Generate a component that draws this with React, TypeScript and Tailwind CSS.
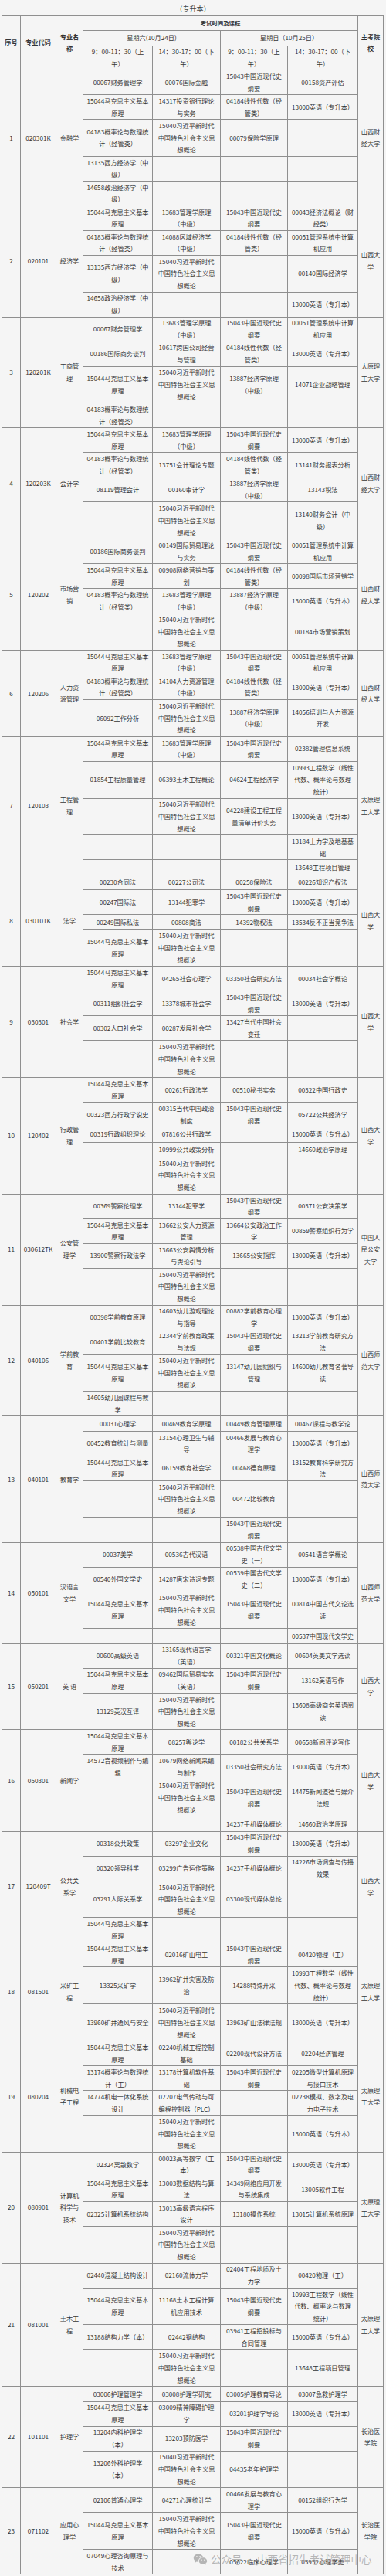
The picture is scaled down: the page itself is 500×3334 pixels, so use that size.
import React from 'react';
import { RiWechatFill } from 'react-icons/ri';

type Group = { no: string; code: string; name: string; school: string; rows: string[][] };

// common courses, '|' marks a line break as in the printed table
const MKS = '15044马克思主义基本|原理';
const XJP = '15040习近平新时代|中国特色社会主义思|想概论';
const ZGJ = '15043中国近现代史|纲要';
const YY = '13000英语（专升本）';
const GL = '04183概率论与数理统|计（经管类）';
const XX = '04184线性代数（经|管类）';
const GLX = '13683管理学原理|（中级）';
const JJX = '13887经济学原理|（中级）';
const JSJ = '00051管理系统中计算|机应用';
const GCSX = '10993工程数学（线性|代数、概率论与数理|统计）';

const groups: Group[] = [
  {
    no: '1', code: '020301K', name: '金融学', school: '山西财|经大学',
    rows: [
      ['00067财务管理学', '00076国际金融', ZGJ, '00158资产评估'],
      [MKS, '14317投资银行理论|与实务', XX, YY],
      [GL, XJP, '00079保险学原理', ''],
      ['13135西方经济学（中|级）', '', '', ''],
      ['14658政治经济学（中|级）', '', '', ''],
    ],
  },
  {
    no: '2', code: '020101', name: '经济学', school: '山西大|学',
    rows: [
      [MKS, GLX, ZGJ, '00043经济法概论（财|经类）'],
      [GL, '14088区域经济学|（中级）', XX, JSJ],
      ['13135西方经济学（中|级）', XJP, '', '00140国际经济学'],
      ['14658政治经济学（中|级）', '', '', YY],
    ],
  },
  {
    no: '3', code: '120201K', name: '工商管|理', school: '太原理|工大学',
    rows: [
      ['00067财务管理学', GLX, ZGJ, JSJ],
      ['00186国际商务谈判', '10617跨国公司经营|与管理', XX, YY],
      [MKS, XJP, JJX, '14071企业战略管理'],
      [GL, '', '', ''],
    ],
  },
  {
    no: '4', code: '120203K', name: '会计学', school: '山西财|经大学',
    rows: [
      [MKS, GLX, ZGJ, YY],
      [GL, '13751会计理论专题', XX, '13141财务报表分析'],
      ['08119管理会计', '00160审计学', JJX, '13143税法'],
      ['', XJP, '', '13140财务会计（中|级）'],
    ],
  },
  {
    no: '5', code: '120202', name: '市场营|销', school: '山西财|经大学',
    rows: [
      ['00186国际商务谈判', '00149国际贸易理论|与实务', ZGJ, JSJ],
      [MKS, '00908网络营销与策|划', XX, '00098国际市场营销学'],
      [GL, GLX, JJX, YY],
      ['', XJP, '', '00184市场营销策划'],
    ],
  },
  {
    no: '6', code: '120206', name: '人力资|源管理', school: '山西财|经大学',
    rows: [
      [MKS, GLX, ZGJ, JSJ],
      [GL, '14104人力资源管理|（中级）', XX, YY],
      ['06092工作分析', XJP, JJX, '14056培训与人力资源|开发'],
    ],
  },
  {
    no: '7', code: '120103', name: '工程管|理', school: '太原理|工大学',
    rows: [
      [MKS, GLX, ZGJ, '02382管理信息系统'],
      ['01854工程质量管理', '06393土木工程概论', '04624工程经济学', GCSX],
      ['', XJP, '04228建设工程工程|量清单计价实务', YY],
      ['', '', '', '13184土力学及地基基|础'],
      ['', '', '', '13648工程项目管理'],
    ],
  },
  {
    no: '8', code: '030101K', name: '法学', school: '山西大|学',
    rows: [
      ['00230合同法', '00227公司法', '00258保险法', '00226知识产权法'],
      ['00247国际法', '13144犯罪学', ZGJ, YY],
      ['00249国际私法', '00808商法', '14392物权法', '13534反不正当竞争法'],
      [MKS, XJP, '', ''],
    ],
  },
  {
    no: '9', code: '030301', name: '社会学', school: '山西大|学',
    rows: [
      [MKS, '04265社会心理学', '03350社会研究方法', '00034社会学概论'],
      ['00311组织社会学', '13378城市社会学', ZGJ, YY],
      ['00302人口社会学', '00287发展社会学', '13427当代中国社会|变迁', ''],
      ['', XJP, '', ''],
    ],
  },
  {
    no: '10', code: '120402', name: '行政管|理', school: '山西大|学',
    rows: [
      [MKS, '00261行政法学', '00510秘书实务', '00322中国行政史'],
      ['00323西方行政学说史', '00315当代中国政治|制度', ZGJ, '05722公共经济学'],
      ['00319行政组织理论', '07816公共行政学', '', YY],
      ['', '10999公共政策分析', '', '14660政治学原理'],
      ['', XJP, '', ''],
    ],
  },
  {
    no: '11', code: '030612TK', name: '公安管|理学', school: '中国人|民公安|大学',
    rows: [
      ['00369警察伦理学', '13144犯罪学', ZGJ, '00371公安决策学'],
      [MKS, '13662公安人力资源|管理', '13664公安政治工作|学', '00859警察组织行为学'],
      ['13900警察行政法学', '13663公安舆情分析|与舆论引导', '13665公安指挥', YY],
      ['', XJP, '', ''],
    ],
  },
  {
    no: '12', code: '040106', name: '学前教|育', school: '山西师|范大学',
    rows: [
      ['00398学前教育原理', '14603幼儿游戏理论|与指导', '00882学前教育心理|学', YY],
      ['00401学前比较教育', '12344学前教育政策|与法规', ZGJ, '13213学前教育研究方|法'],
      [MKS, XJP, '13147幼儿园组织与|管理', '14600幼儿教育名著导|读'],
      ['14605幼儿园课程与教|学', '', '', ''],
    ],
  },
  {
    no: '13', code: '040101', name: '教育学', school: '山西师|范大学',
    rows: [
      ['00031心理学', '00469教育学原理', '00449教育管理原理', '00467课程与教学论'],
      ['00452教育统计与测量', '13154心理卫生与辅|导', '00466发展与教育心|理学', YY],
      [MKS, '06159教育社会学', '00468德育原理', '13152教育科学研究方|法'],
      ['', XJP, '00472比较教育', ''],
      ['', '', ZGJ, ''],
    ],
  },
  {
    no: '14', code: '050101', name: '汉语言|文学', school: '山西师|范大学',
    rows: [
      ['00037美学', '00536古代汉语', '00538中国古代文学|史（一）', '00541语言学概论'],
      ['00540外国文学史', '14287唐宋诗词专题', '00539中国古代文学|史（二）', YY],
      [MKS, XJP, ZGJ, '00814中国古代文论选|读'],
      ['', '', '', '00537中国现代文学史'],
    ],
  },
  {
    no: '15', code: '050201', name: '英 语', school: '山西大|学',
    rows: [
      ['00600高级英语', '13165现代语言学|（英语）', '00321中国文化概论', '00604英美文学选读'],
      [MKS, '09462国际贸易实务|（英语）', ZGJ, '13162英语写作'],
      ['13129英汉互译', XJP, '', '13608高级商务英语阅|读'],
    ],
  },
  {
    no: '16', code: '050301', name: '新闻学', school: '山西大|学',
    rows: [
      [MKS, '08257舆论学', '00182公共关系学', '00658新闻评论写作'],
      ['14572音视频制作与编|辑', '10679网络新闻采编|与制作', '03350社会研究方法', YY],
      ['', XJP, ZGJ, '14475新闻道德与媒介|法规'],
      ['', '', '14237手机媒体概论', '14660政治学原理'],
    ],
  },
  {
    no: '17', code: '120409T', name: '公共关|系学', school: '山西大|学',
    rows: [
      ['00318公共政策', '03297企业文化', ZGJ, YY],
      ['00320领导科学', '03299广告运作策略', '14237手机媒体概论', '14226市场调查与传播|效果'],
      ['03291人际关系学', XJP, '03300现代媒体总论', ''],
      [MKS, '', '', ''],
    ],
  },
  {
    no: '18', code: '081501', name: '采矿工|程', school: '太原理|工大学',
    rows: [
      [MKS, '02016矿山电工', ZGJ, '00420物理（工）'],
      ['13325采矿学', '13962矿井灾害及防|治', '14288特殊开采', GCSX],
      ['13960矿井通风与安全', XJP, '13963矿山法律法规', YY],
    ],
  },
  {
    no: '19', code: '080204', name: '机械电|子工程', school: '太原理|工大学',
    rows: [
      [MKS, '02240机械工程控制|基础', '02200现代设计方法', '02204经济管理'],
      ['13174概率论与数理统|计（工）', '13178计算机软件基|础', ZGJ, '02205微型计算机原理|与接口技术'],
      ['14774机电一体化系统|设计', '02207电气传动与可|编程控制器（PLC）', '', '02238模拟、数字及电|力电子技术'],
      ['', XJP, '', YY],
    ],
  },
  {
    no: '20', code: '080901', name: '计算机|科学与|技术', school: '太原理|工大学',
    rows: [
      ['02324离散数学', '00023高等数学（工|本）', ZGJ, YY],
      [MKS, '13003数据结构与算|法', '14349网络应用开发|与系统集成', '13005软件工程'],
      ['02325计算机系统结构', '13013高级语言程序|设计', '13180操作系统', '13015计算机系统原理'],
      ['', XJP, '', ''],
    ],
  },
  {
    no: '21', code: '081001', name: '土木工|程', school: '太原理|工大学',
    rows: [
      ['02440混凝土结构设计', '02160流体力学', '02404工程地质及土|力学', '00420物理（工）'],
      [MKS, '11168土木工程计算|机应用技术', ZGJ, GCSX],
      ['13188结构力学（本）', '02442钢结构', '03941工程招投标与|合同管理', YY],
      ['', XJP, '', '13648工程项目管理'],
    ],
  },
  {
    no: '22', code: '101101', name: '护理学', school: '长治医|学院',
    rows: [
      ['03006护理管理学', '03008护理学研究', '03005护理教育导论', '03007急救护理学'],
      [MKS, '03009精神障碍护理|学', '03201护理学导论', YY],
      ['13204内科护理学|（本）', '13203预防医学', ZGJ, ''],
      ['13206外科护理学|（本）', XJP, '04435老年护理学', ''],
    ],
  },
  {
    no: '23', code: '071102', name: '应用心|理学', school: '长治医|学院',
    rows: [
      ['02106普通心理学', '04271心理统计学', '00466发展与教育心|理学', '00152组织行为学'],
      [MKS, XJP, ZGJ, YY],
      ['07049心理咨询原理与|技术', '', '05622临床心理学', '05952心理学史'],
    ],
  },
];

const rowH: Record<number, string> = { 1: 'h-[19.4px]', 2: 'h-[32px]', 3: 'h-[47.8px]' };
const courseW = ['w-[90px]', 'w-[88px]', 'w-[87px]', 'w-[91px]'];
const B = 'border-r border-b border-[#8f8f8f]';

const Lines = ({ text }: { text: string }) => (
  <>
    {text.split('|').map((l, i) => (
      <span key={i} className="block whitespace-nowrap">{l}</span>
    ))}
  </>
);

const Cell = ({ w, text, className = '' }: { w: string; text: string; className?: string }) => (
  <div className={`${w} shrink-0 ${B} flex flex-col items-center justify-center text-center ${className}`}>
    <Lines text={text} />
  </div>
);

const Header = () => (
  <div className="flex">
    <Cell w="w-[24px]" text="序号" className="font-bold" />
    <Cell w="w-[46px]" text="专业代码" className="font-bold" />
    <Cell w="w-[35px]" text="专业名|称" className="font-bold" />
    <div className="flex flex-col w-[356px] shrink-0">
      <div className={`h-[19px] ${B} flex items-center justify-center font-bold text-[7.4px]`}>考试时间及课程</div>
      <div className="flex h-[20px]">
        <Cell w="w-[178px]" text="星期六(10月24日)" />
        <Cell w="w-[178px]" text="星期日（10月25日）" />
      </div>
      <div className="flex h-[31.5px]">
        <Cell w={courseW[0]} text="9：00-11：30（上|午）" />
        <Cell w={courseW[1]} text="14：30-17：00（下|午）" />
        <Cell w={courseW[2]} text="9：00-11：30（上|午）" />
        <Cell w={courseW[3]} text="14：30-17：00（下|午）" />
      </div>
    </div>
    <Cell w="w-[33px]" text="主考院|校" className="font-bold" />
  </div>
);

const GroupRow = ({ g }: { g: Group }) => (
  <div className="flex">
    <Cell w="w-[24px]" text={g.no} />
    <Cell w="w-[46px]" text={g.code} />
    <Cell w="w-[35px]" text={g.name} />
    <div className="flex flex-col w-[356px] shrink-0">
      {g.rows.map((r, i) => {
        const n = Math.max(...r.map(c => c.split('|').length));
        return (
          <div key={i} className={`flex ${rowH[n]}`}>
            {r.map((c, j) => (
              <Cell key={j} w={courseW[j]} text={c} />
            ))}
          </div>
        );
      })}
    </div>
    <Cell w="w-[33px]" text={g.school} />
  </div>
);

export default function App() {
  return (
    <div className="relative w-[500px] min-h-[3334px] bg-[#f5f5f5] text-[#353535] font-['Noto_Sans_CJK_SC','Noto_Sans',sans-serif] text-[8.2px] leading-[15.7px]">
      <div className="h-[19.5px] pt-[4px] flex items-center justify-center text-[9px] text-[#444]">（专升本）</div>
      <div className="ml-[2px] w-[495px] border-l border-t border-[#8f8f8f]">
        <Header />
        {groups.map(g => (
          <GroupRow key={g.no} g={g} />
        ))}
      </div>

      {/* watermark over the last rows */}
      <div className="absolute left-[250px] top-[3302px] flex items-center gap-[4px] text-[13.5px] leading-[20px] text-[#9a9a9a]/70 pointer-events-none">
        <RiWechatFill className="w-[19px] h-[19px]" />
        <span className="whitespace-nowrap">公众号 · 山西省招生考试管理中心</span>
      </div>
    </div>
  );
}
